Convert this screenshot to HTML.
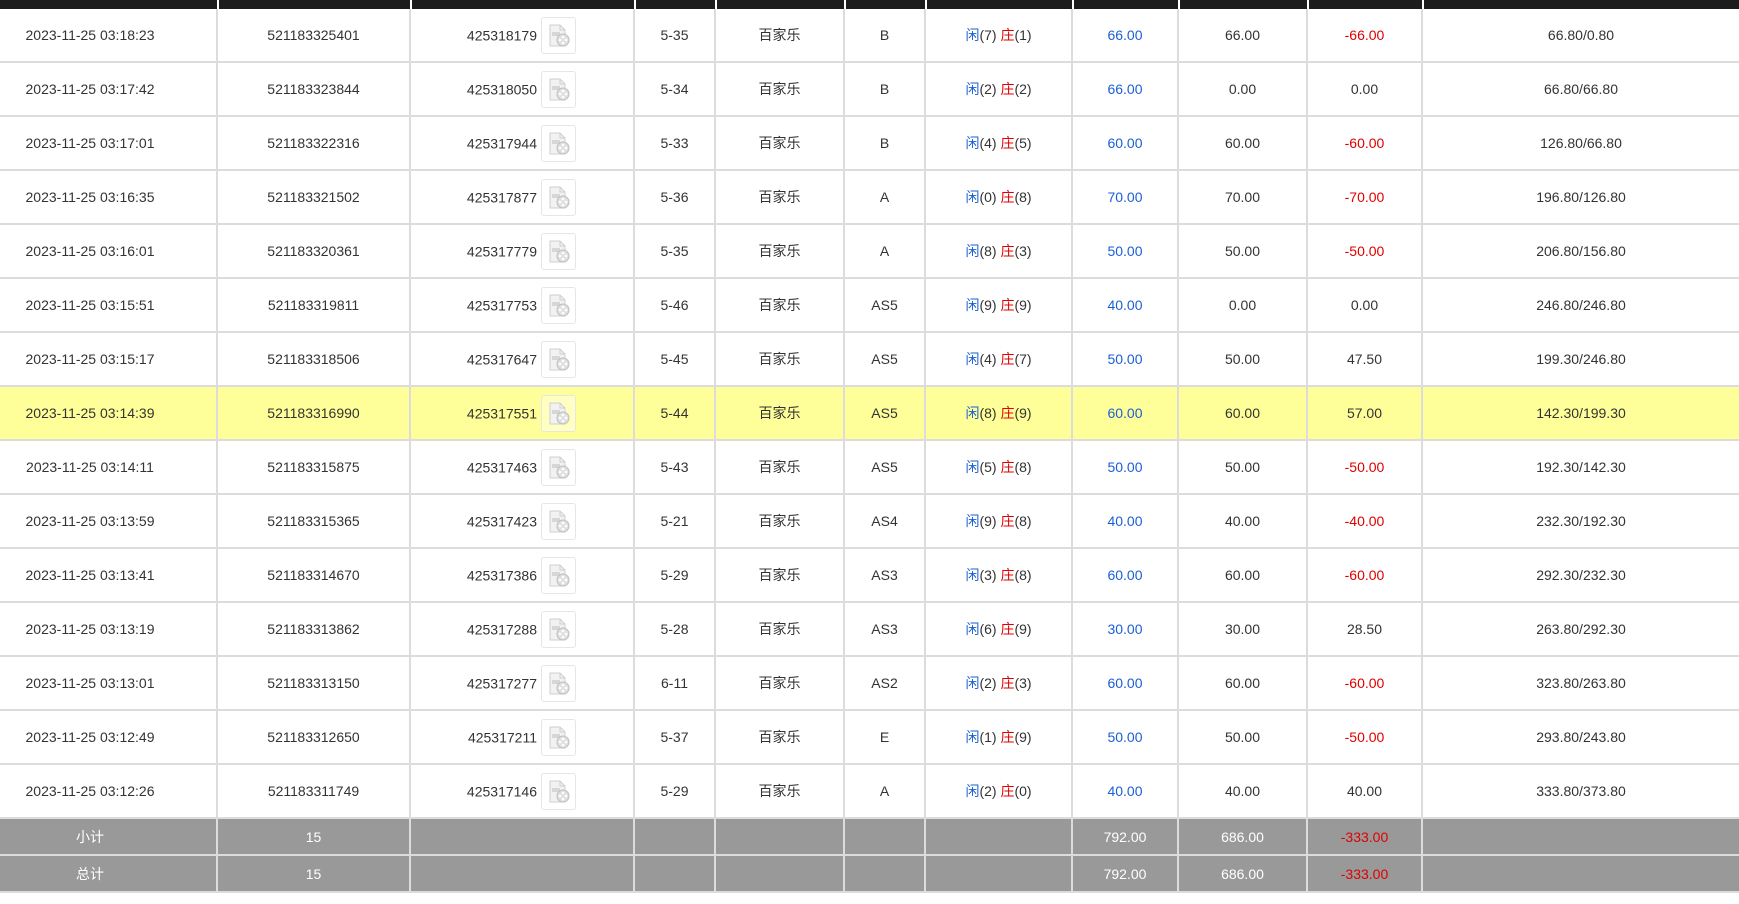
<!DOCTYPE html>
<html><head><meta charset="utf-8"><style>
html,body{margin:0;padding:0;background:#fff;width:1739px;height:904px;overflow:hidden}
body{font-family:"Liberation Sans","Noto Sans CJK SC",sans-serif;font-size:14px;color:#333}
.top{height:9px;background:#1c1c1c;display:flex}
.top div{border-right:2px solid #fff;box-sizing:border-box;height:9px}
table{border-collapse:collapse;table-layout:fixed;width:1739px}
td{border:2px solid #dcdcdc;height:52px;text-align:center;padding:0;white-space:nowrap;vertical-align:middle}
tr:first-child td{border-top:none}
td:first-child{border-left:none;padding-right:36px}td:last-child{border-right:none}
tr.hl td{background:#ffff99}
td.ic{text-align:right;padding-right:57px}
td.ic span.n{vertical-align:middle}
.icon{display:inline-block;width:33px;height:35px;border:1px solid #e6e6e6;border-radius:3px;vertical-align:middle;margin-left:4px;position:relative;background:rgba(255,255,255,.4)}
.icon svg{position:absolute;left:6px;top:6px}
.b{color:#1a5fd6}.r{color:#e00000}
tr.sum td{background:#999;color:#fff;height:35px;border-color:#dcdcdc}
tr.sum td .r{color:#e00000}
</style></head><body>
<div class="top">
<div style="width:219px"></div><div style="width:193px"></div><div style="width:224px"></div><div style="width:81px"></div><div style="width:129px"></div><div style="width:81px"></div><div style="width:147px"></div><div style="width:106px"></div><div style="width:129px"></div><div style="width:115px"></div><div style="width:315px;border:none"></div>
</div>
<table>
<colgroup><col style="width:217px"><col style="width:193px"><col style="width:224px"><col style="width:81px"><col style="width:129px"><col style="width:81px"><col style="width:147px"><col style="width:106px"><col style="width:129px"><col style="width:115px"><col style="width:317px"></colgroup>
<tbody id="tb">
</tbody></table>
<script>
var rows=[
["2023-11-25 03:18:23","521183325401","425318179","5-35","B",7,1,"66.00","66.00","-66.00","66.80/0.80"],
["2023-11-25 03:17:42","521183323844","425318050","5-34","B",2,2,"66.00","0.00","0.00","66.80/66.80"],
["2023-11-25 03:17:01","521183322316","425317944","5-33","B",4,5,"60.00","60.00","-60.00","126.80/66.80"],
["2023-11-25 03:16:35","521183321502","425317877","5-36","A",0,8,"70.00","70.00","-70.00","196.80/126.80"],
["2023-11-25 03:16:01","521183320361","425317779","5-35","A",8,3,"50.00","50.00","-50.00","206.80/156.80"],
["2023-11-25 03:15:51","521183319811","425317753","5-46","AS5",9,9,"40.00","0.00","0.00","246.80/246.80"],
["2023-11-25 03:15:17","521183318506","425317647","5-45","AS5",4,7,"50.00","50.00","47.50","199.30/246.80"],
["2023-11-25 03:14:39","521183316990","425317551","5-44","AS5",8,9,"60.00","60.00","57.00","142.30/199.30"],
["2023-11-25 03:14:11","521183315875","425317463","5-43","AS5",5,8,"50.00","50.00","-50.00","192.30/142.30"],
["2023-11-25 03:13:59","521183315365","425317423","5-21","AS4",9,8,"40.00","40.00","-40.00","232.30/192.30"],
["2023-11-25 03:13:41","521183314670","425317386","5-29","AS3",3,8,"60.00","60.00","-60.00","292.30/232.30"],
["2023-11-25 03:13:19","521183313862","425317288","5-28","AS3",6,9,"30.00","30.00","28.50","263.80/292.30"],
["2023-11-25 03:13:01","521183313150","425317277","6-11","AS2",2,3,"60.00","60.00","-60.00","323.80/263.80"],
["2023-11-25 03:12:49","521183312650","425317211","5-37","E",1,9,"50.00","50.00","-50.00","293.80/243.80"],
["2023-11-25 03:12:26","521183311749","425317146","5-29","A",2,0,"40.00","40.00","40.00","333.80/373.80"]];
var icon='<span class="icon"><svg width="22" height="24" viewBox="0 0 22 24"><path d="M2 1h10l5 5v16H2z" fill="#f2f2f2" stroke="#cfcfcf"/><path d="M12 1v5h5" fill="none" stroke="#cfcfcf"/><rect x="4" y="8" width="8" height="4" fill="#d6d6d6"/><circle cx="15" cy="16" r="6" fill="#e0e0e0" stroke="#bdbdbd"/><circle cx="15" cy="13" r="1.3" fill="#fff"/><circle cx="12" cy="16" r="1.3" fill="#fff"/><circle cx="18" cy="16" r="1.3" fill="#fff"/><circle cx="15" cy="19" r="1.3" fill="#fff"/></svg></span>';
var h="";
rows.forEach(function(r,i){
h+='<tr'+(i==7?' class="hl"':'')+'><td>'+r[0]+'</td><td>'+r[1]+'</td><td class="ic"><span class="n">'+r[2]+'</span>'+icon+'</td><td>'+r[3]+'</td><td>百家乐</td><td>'+r[4]+'</td><td><span class="b">闲</span>('+r[5]+') <span class="r">庄</span>('+r[6]+')</td><td class="b">'+r[7]+'</td><td>'+r[8]+'</td><td'+(r[9][0]=='-'?' class="r"':'')+'>'+r[9]+'</td><td>'+r[10]+'</td></tr>';
});
["小计","总计"].forEach(function(n){
h+='<tr class="sum"><td>'+n+'</td><td>15</td><td></td><td></td><td></td><td></td><td></td><td>792.00</td><td>686.00</td><td><span class="r">-333.00</span></td><td></td></tr>';
});
document.getElementById("tb").innerHTML=h;
</script>
</body></html>
